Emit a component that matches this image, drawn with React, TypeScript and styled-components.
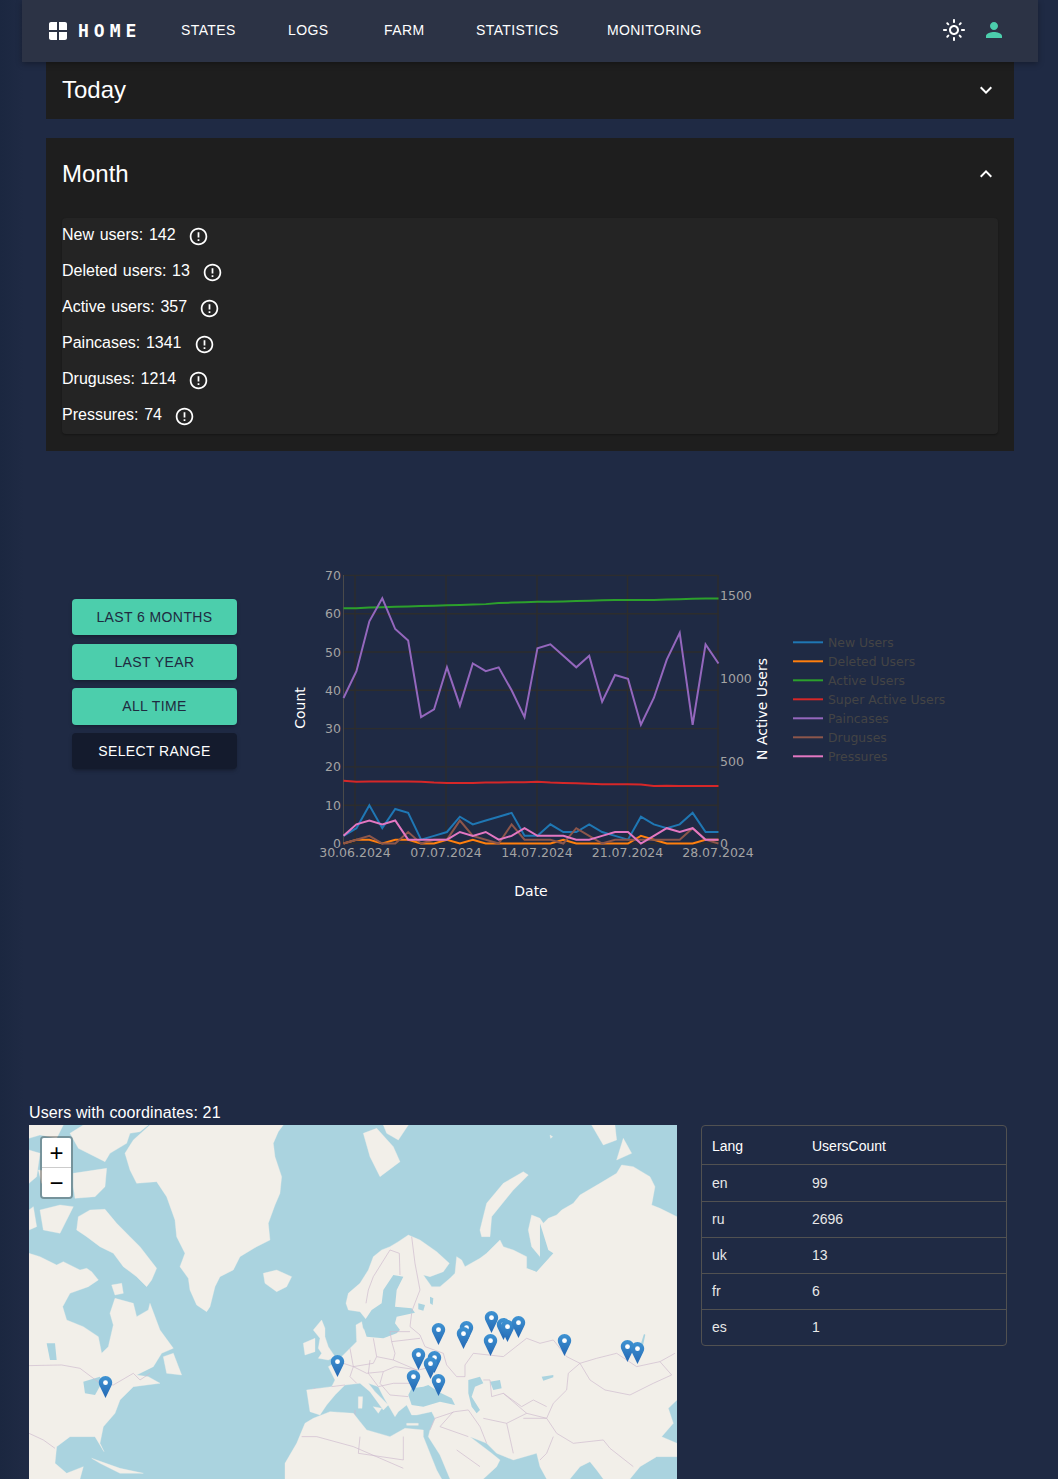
import styled, { createGlobalStyle } from "styled-components";
import {
  MdErrorOutline,
  MdExpandLess,
  MdExpandMore,
  MdOutlineLightMode,
  MdPerson,
  MdWindow,
} from "react-icons/md";

const GlobalStyle = createGlobalStyle`
  html, body {
    margin: 0;
    padding: 0;
    background: #1f2a44;
    overflow: hidden;
  }
  body {
    font-family: "Liberation Sans", Arial, sans-serif;
    color: #fff;
  }
`;

const Page = styled.div`
  width: 1058px;
  height: 1479px;
  overflow: hidden;
  background: linear-gradient(90deg, #1b2740 0, #1f2a44 24px);
`;

const Nav = styled.header`
  height: 62px;
  margin: 0 20px 0 22px;
  padding: 0 24px;
  display: flex;
  align-items: center;
  background: #2c3345;
  box-shadow: 0 2px 6px rgba(0, 0, 0, 0.3);
  position: relative;
  z-index: 2;
`;

const Brand = styled.div`
  display: flex;
  align-items: center;
  gap: 8px;
  width: 135px;
  font-family: "DejaVu Sans Mono", monospace;
  font-size: 18px;
  font-weight: 700;
  letter-spacing: 5px;
`;

const BrandText = styled.span`
  padding-bottom: 2px;
`;

const NavLinks = styled.nav`
  display: flex;
  flex: 1;
  padding-bottom: 2px;
`;

const NavLink = styled.a<{ $w: number }>`
  width: ${(p) => p.$w}px;
  font-size: 14px;
  letter-spacing: 0.4px;
  white-space: nowrap;
`;

const NavIcons = styled.div`
  display: flex;
  align-items: center;
  gap: 16px;
  margin-right: 8px;
  padding-bottom: 2px;
  font-size: 24px;
  svg {
    display: block;
  }
`;

const Stack = styled.section`
  margin: 0 44px 0 46px;
  display: flex;
  flex-direction: column;
  gap: 19px;
`;

const Card = styled.div`
  background: #1e1e1e;
  padding: 0 16px;
`;

const CardHead = styled.div<{ $h: number; $below: number }>`
  height: ${(p) => p.$h}px;
  margin-bottom: ${(p) => p.$below}px;
  display: flex;
  align-items: center;
  justify-content: space-between;
  font-size: 24px;
`;

const StatPanel = styled.div`
  height: 216px;
  margin-bottom: 17px;
  display: flex;
  flex-direction: column;
  background: #242424;
  border-radius: 4px;
  box-shadow: 0 1px 2px rgba(0, 0, 0, 0.3);
`;

const StatRow = styled.div`
  height: 36px;
  flex: none;
  display: flex;
  align-items: center;
  gap: 12px;
  font-size: 16px;
  word-spacing: 1.2px;
  svg {
    display: block;
  }
`;

const StatText = styled.span`
  padding-bottom: 2px;
`;

const ChartRow = styled.section`
  margin-top: 109px;
  padding-left: 72px;
  display: flex;
  gap: 43px;
`;

const RangeButtons = styled.div`
  width: 165px;
  margin-top: 39px;
  display: flex;
  flex-direction: column;
  gap: 8.37px;
`;

const RangeButton = styled.button<{ $dark?: boolean }>`
  height: 36.3px;
  padding: 0;
  border: 0;
  border-radius: 4px;
  font-family: inherit;
  font-size: 14px;
  letter-spacing: 0.4px;
  background: ${(p) => (p.$dark ? "#141b2d" : "#4cceac")};
  color: ${(p) => (p.$dark ? "#fff" : "#1f2a40")};
  box-shadow: 0 3px 3px -2px rgba(0, 0, 0, 0.2), 0 2px 4px rgba(0, 0, 0, 0.14);
`;

const ChartSvg = styled.svg`
  display: block;
  font-family: "DejaVu Sans", sans-serif;
`;

const GeoTitle = styled.div`
  margin: 192px 0 1px 29px;
  height: 22px;
  font-size: 16px;
  line-height: 22px;
  letter-spacing: 0.12px;
`;

const GeoRow = styled.section`
  padding-left: 29px;
  display: flex;
  align-items: flex-start;
  gap: 24px;
`;

const MapBox = styled.div`
  position: relative;
  width: 648px;
  height: 354px;
  overflow: hidden;
  background: #aad3df;
`;

const MapSvg = styled.svg`
  display: block;
`;

const ZoomBox = styled.div`
  position: absolute;
  left: 11px;
  top: 11px;
  width: 29px;
  border: 2px solid rgba(0, 0, 0, 0.3);
  border-radius: 4px;
  background-clip: padding-box;
`;

const ZoomButton = styled.div<{ $first?: boolean }>`
  height: 29px;
  display: flex;
  align-items: center;
  justify-content: center;
  background: #fff;
  color: #000;
  font-family: "Liberation Sans", sans-serif;
  font-size: 24px;
  border-bottom: ${(p) => (p.$first ? "1px solid #ccc" : "0")};
  border-radius: ${(p) => (p.$first ? "2px 2px 0 0" : "0 0 2px 2px")};
`;

const Pin = styled.svg<{ $x: number; $y: number }>`
  position: absolute;
  left: ${(p) => p.$x}px;
  top: ${(p) => p.$y}px;
  width: 15px;
  height: 22px;
`;

const LangTable = styled.div`
  width: 306px;
  box-sizing: border-box;
  border: 1px solid #515151;
  border-radius: 4px;
  font-size: 14px;
`;

const LangHead = styled.div`
  height: 37px;
  padding: 1px 0 0 10px;
  display: grid;
  grid-template-columns: 100px 1fr;
  align-items: center;
  color: #fff;
`;

const LangRow = styled.div`
  height: 34px;
  padding: 0 0 1px 10px;
  display: grid;
  grid-template-columns: 100px 1fr;
  align-items: center;
  color: #e8e8e8;
  border-top: 1px solid #515151;
  &:nth-child(2) {
    height: 36px;
    padding-bottom: 0;
  }
`;

const NAV_ITEMS: [string, number][] = [
  ["STATES", 107],
  ["LOGS", 96],
  ["FARM", 92],
  ["STATISTICS", 131],
  ["MONITORING", 120],
];

const STATS: [string, string][] = [
  ["New users:", "142"],
  ["Deleted users:", "13"],
  ["Active users:", "357"],
  ["Paincases:", "1341"],
  ["Druguses:", "1214"],
  ["Pressures:", "74"],
];

const LANGS: [string, string][] = [
  ["en", "99"],
  ["ru", "2696"],
  ["uk", "13"],
  ["fr", "6"],
  ["es", "1"],
];

const SERIES: { name: string; color: string; values: number[] }[] = [
  {
    name: "New Users",
    color: "#1f77b4",
    values: [2, 4, 10, 4, 9, 8, 1, 2, 3, 7, 5, 6, 7, 8, 2, 2, 5, 3, 3, 5, 3, 2, 1, 7, 5, 4, 5, 8, 3, 3],
  },
  {
    name: "Deleted Users",
    color: "#ff7f0e",
    values: [0, 1, 1, 0, 1, 1, 0, 0, 1, 0, 1, 0, 0, 0, 0, 0, 0, 1, 0, 0, 0, 0, 0, 2, 1, 0, 0, 0, 1, 1],
  },
  {
    name: "Active Users",
    color: "#2ca02c",
    values: [
      61.4, 61.4, 61.6, 61.7, 61.8, 61.9, 62, 62.1, 62.2, 62.3, 62.4, 62.5, 62.8, 62.9, 63, 63.1, 63.1, 63.2, 63.3,
      63.4, 63.5, 63.6, 63.6, 63.6, 63.6, 63.7, 63.8, 63.9, 64, 64,
    ],
  },
  {
    name: "Super Active Users",
    color: "#d62728",
    values: [
      16.4, 16.1, 16.2, 16.2, 16.2, 16.2, 16.1, 15.9, 15.8, 15.8, 15.8, 15.9, 15.9, 16, 16, 16.1, 15.9, 15.8, 15.7,
      15.6, 15.5, 15.5, 15.5, 15.4, 15, 15.1, 15, 15, 15, 15,
    ],
  },
  {
    name: "Paincases",
    color: "#9467bd",
    values: [38, 45, 58, 64, 56, 53, 33, 35, 46, 36, 47, 45, 46, 40, 33, 51, 52, 49, 46, 49, 37, 44, 43, 31, 38, 48, 55, 31, 52, 47],
  },
  {
    name: "Druguses",
    color: "#8c564b",
    values: [0, 1, 2, 0, 0, 3, 0, 1, 1, 6, 2, 1, 0, 5, 1, 1, 1, 0, 4, 2, 0, 1, 1, 1, 1, 1, 1, 4, 1, 0],
  },
  {
    name: "Pressures",
    color: "#e377c2",
    values: [2, 5, 6, 5, 6, 1, 1, 1, 1, 3, 2, 3, 1, 2, 4, 2, 2, 2, 1, 1, 2, 3, 3, 0, 2, 4, 3, 4, 1, 1],
  },
];

const PLOT_L = 343.5;
const PLOT_R = 718.5;
const Y0 = 843.5;
const UNIT = 3.83;
const STEP = (PLOT_R - PLOT_L) / 29;

function LineChart() {
  const yTicks = [0, 10, 20, 30, 40, 50, 60, 70];
  const xTicks: [string, number][] = [
    ["30.06.2024", 355],
    ["07.07.2024", 446],
    ["14.07.2024", 537],
    ["21.07.2024", 627.5],
    ["28.07.2024", 718],
  ];
  const rightTicks: [string, number][] = [
    ["1500", 600],
    ["1000", 683],
    ["500", 766],
    ["0", 848],
  ];
  return (
    <ChartSvg width={680} height={350} viewBox="280 560 680 350">
      <g stroke="#2d2d2d" strokeWidth={1.4}>
        {yTicks.map((t) => (
          <line key={t} x1={PLOT_L} x2={PLOT_R} y1={Y0 - t * UNIT} y2={Y0 - t * UNIT} />
        ))}
        {xTicks.map(([label, x]) => (
          <line key={label} x1={x} x2={x} y1={575} y2={Y0} />
        ))}
      </g>
      <line x1={PLOT_L} x2={PLOT_L} y1={575} y2={Y0} stroke="#4a4a4a" />
      {SERIES.map((s) => (
        <polyline
          key={s.name}
          fill="none"
          stroke={s.color}
          strokeWidth={2}
          points={s.values.map((v, i) => `${PLOT_L + i * STEP},${Y0 - v * UNIT}`).join(" ")}
        />
      ))}
      <g fill="#a3a3a3" fontSize={12.5}>
        {yTicks.map((t) => (
          <text key={t} x={341} y={Y0 - t * UNIT + 4.5} textAnchor="end">
            {t}
          </text>
        ))}
        {xTicks.map(([label, x]) => (
          <text key={label} x={x} y={857} textAnchor="middle">
            {label}
          </text>
        ))}
        {rightTicks.map(([label, y]) => (
          <text key={label} x={720} y={y}>
            {label}
          </text>
        ))}
      </g>
      <g fill="#fff" fontSize={14}>
        <text x={531} y={896} textAnchor="middle">
          Date
        </text>
        <text transform="translate(305 708) rotate(-90)" textAnchor="middle">
          Count
        </text>
        <text transform="translate(767 709) rotate(-90)" textAnchor="middle">
          N Active Users
        </text>
      </g>
      {SERIES.map((s, i) => (
        <g key={s.name}>
          <line x1={793} x2={823} y1={642.3 + i * 19} y2={642.3 + i * 19} stroke={s.color} strokeWidth={2} />
          <text x={828} y={647 + i * 19} fill="#444" fontSize={12.4}>
            {s.name}
          </text>
        </g>
      ))}
    </ChartSvg>
  );
}

// coordinates below are in the 3x crop space, the groups scale them back down
const WEST_LAND = [
  "M390,105 L790,105 L775,125 L760,160 L765,200 L785,260 L780,310 L765,345 L745,400 L750,450 L710,470 L660,500 L640,540 L600,560 L585,590 L570,650 L560,665 L530,645 L510,600 L505,565 L480,530 L495,490 L470,440 L465,390 L440,320 L410,275 L350,280 L330,240 L315,190 L340,150Z",
  "M190,105 L385,105 L360,125 L330,130 L320,160 L270,190 L255,215 L215,195 L175,175 L150,130Z",
  "M160,250 L260,235 L255,290 L225,320 L165,325 L160,290Z",
  "M27,105 L130,105 L110,145 L60,135 L27,145Z",
  "M27,180 L60,190 L50,260 L27,280Z",
  "M55,240 L140,250 L130,310 L65,280Z",
  "M27,360 L40,350 L50,410 L27,420Z",
  "M60,360 L120,345 L160,350 L120,430 L70,420Z",
  "M175,380 L210,360 L255,358 L290,400 L330,440 L360,470 L410,535 L395,570 L380,590 L350,560 L310,530 L280,490 L240,470 L200,440 L170,420Z",
  "M275,585 L305,580 L310,610 L285,615Z",
  "M27,490 L60,500 L110,525 L130,515 L180,540 L200,535 L215,545 L235,570 L205,590 L150,610 L128,650 L140,690 L190,710 L235,740 L245,790 L265,770 L280,705 L270,670 L285,625 L340,640 L350,680 L385,660 L390,640 L420,720 L460,775 L425,790 L400,830 L350,855 L385,860 L420,880 L380,885 L340,890 L300,930 L285,970 L250,1010 L240,1060 L252,1085 L225,1040 L150,1040 L110,1070 L105,1120 L140,1150 L190,1130 L180,1167 L27,1167Z",
  "M430,800 L460,790 L485,855 L440,850Z",
  "M215,1105 L300,1135 L370,1150 L300,1150 L240,1120Z",
  "M730,550 L770,540 L815,560 L800,590 L770,605 L735,580Z",
  "M905,690 L915,715 L915,740 L925,770 L945,800 L925,810 L895,805 L905,790 L895,775 L900,745 L880,720Z",
  "M850,760 L885,745 L885,785 L855,795Z",
];

const WEST_WATER = [
  "M190,875 L240,860 L245,880 L225,915 L195,910Z",
  "M80,760 L105,760 L110,810 L90,810Z",
];

const EAST_LAND = [
  "M-35,830 L-10,815 L25,780 L50,755 L48,705 L65,695 L70,720 L80,690 L60,665 L25,660 L18,640 L25,610 L60,580 L85,540 L100,500 L125,480 L150,470 L175,455 L205,435 L240,450 L290,485 L328,520 L310,545 L270,560 L250,555 L275,590 L300,590 L330,565 L345,550 L350,500 L365,510 L375,530 L420,505 L440,490 L480,450 L490,470 L520,480 L560,500 L560,535 L590,545 L600,500 L575,470 L565,420 L575,375 L600,385 L610,400 L625,385 L650,375 L665,360 L700,340 L720,315 L780,280 L830,250 L845,225 L880,230 L930,260 L945,290 L935,345 L960,355 L1011,380 L1011,930 L985,955 L1000,1000 L965,1040 L1011,1060 L1011,1100 L950,1100 L900,1130 L870,1167 L790,1167 L770,1140 L750,1115 L720,1130 L690,1167 L620,1167 L600,1130 L590,1090 L520,1110 L470,1090 L440,1060 L390,1040 L455,1090 L480,1110 L470,1130 L430,1167 L330,1167 L300,1095 L265,1040 L270,1020 L285,985 L275,965 L230,975 L215,975 L200,945 L175,965 L165,980 L130,920 L115,890 L85,880 L105,905 L145,945 L130,960 L90,905 L60,880 L15,885 L-15,915 L-40,945 L-60,975 L-90,965 L-100,900 L-25,890 L-15,870Z",
  "M-165,1167 L-165,1120 L-130,1060 L-105,1000 L-80,985 L-30,965 L40,970 L60,995 L80,1020 L150,1040 L195,1015 L250,1020 L250,1040 L290,1140 L305,1167Z",
  "M70,130 L110,115 L160,170 L180,215 L120,260 L90,200Z",
  "M130,105 L205,105 L175,150 L140,130Z",
  "M420,420 L440,340 L490,280 L550,245 L565,255 L520,300 L455,380 L450,440 L425,440Z",
  "M755,105 L825,105 L830,150 L790,165Z",
  "M850,145 L875,190 L830,210Z",
  "M630,135 L638,140 L632,145Z",
  "M100,950 L125,955 L115,970Z",
  "M55,920 L68,920 L66,955 L55,955Z",
  "M200,1000 L235,1000 L235,1006 L200,1006Z",
  "M285,1000 L305,985 L300,1000Z",
];

const EAST_WATER = [
  "M75,690 L95,660 L125,640 L130,600 L160,555 L190,560 L170,600 L165,650 L215,655 L225,668 L170,680 L165,700 L180,720 L170,730 L130,745 L80,740 L70,710Z",
  "M205,915 L215,895 L250,890 L265,885 L295,905 L335,925 L345,945 L300,935 L250,950 L215,945Z",
  "M385,870 L420,860 L430,880 L405,890 L395,920 L420,960 L410,970 L395,950 L385,910Z",
  "M600,400 L625,480 L640,490 L590,545 L565,535 L600,500Z",
  "M235,640 L255,645 L250,662 L235,658Z",
  "M270,620 L280,625 L278,645 L270,640Z",
  "M900,770 L912,732 L916,734 L908,772Z",
  "M450,875 L480,870 L485,895 L460,900Z",
  "M605,860 L640,855 L640,862 L610,872Z",
];

const EAST_BORDERS = [
  "M150,480 L100,560 L85,600 L78,640",
  "M150,480 L178,490 L180,555",
  "M215,440 L225,520 L240,600 L215,665",
  "M215,670 L210,710 L240,735 L255,770 L310,790 L320,825",
  "M150,725 L210,725",
  "M150,725 L155,755 L240,745",
  "M100,745 L110,800 L160,810 L165,790 L155,755",
  "M30,775 L40,830 L100,820 L110,800",
  "M-5,815 L40,830 L30,860 L50,880",
  "M40,830 L80,850 L130,845 L165,830 L235,840 L280,830",
  "M90,810 L85,850 L115,890 L160,880 L210,880",
  "M160,810 L230,840 L225,880",
  "M130,845 L120,880 L150,915 L205,920",
  "M-25,890 L15,885",
  "M320,825 L350,860 L375,860 L375,825",
  "M285,985 L345,965 L385,960 L420,1010 L440,1060",
  "M375,825 L400,790 L490,800 L560,745 L600,760 L640,750 L680,800 L720,820",
  "M720,820 L770,805 L830,790 L890,830 L960,815 L1005,790",
  "M720,820 L750,870 L795,900 L870,915 L940,880 L995,855 L960,815",
  "M720,820 L685,850 L680,900 L640,940 L620,985 L560,970 L490,910 L455,920 L450,870 L430,870",
  "M430,985 L500,1000 L520,1090",
  "M550,985 L620,985 L650,1030 L700,1060 L790,1050 L810,1075 L880,1130",
  "M490,910 L545,950 L580,930 L620,950",
  "M500,1000 L560,970",
  "M640,1040 L620,1090 L600,1110",
  "M340,965 L300,1010 L385,1040",
  "M285,985 L270,1020",
  "M350,1080 L420,1130",
  "M190,1040 L190,1110 L55,1090 L60,1040",
  "M-115,1040 L-70,1040 L40,1070 L190,1135",
];

const WEST_BORDERS = [
  "M27,827 L125,825 L180,835 L240,880 L280,885 L340,850 L360,870 L390,850",
  "M945,905 L880,895",
  "M810,1120 L860,1070 L960,1140 L1020,1110",
  "M860,1070 L885,1167",
  "M920,970 L920,1015 L870,1050 L835,1080",
  "M1005,960 L1005,1010",
  "M27,1030 L70,1050 L105,1075",
];

const PINS: [number, number][] = [
  [-703, 858],
  [-8, 795],
  [380, 694],
  [295, 700],
  [370, 710],
  [454, 663],
  [451, 733],
  [490, 685],
  [502, 691],
  [535, 679],
  [673, 733],
  [862, 751],
  [892, 757],
  [235, 775],
  [283, 782],
  [270, 802],
  [220, 841],
  [295, 851],
];

function WorldMap() {
  return (
    <MapBox>
      <MapSvg width={648} height={354} viewBox="29 1125 648 354">
        <rect x={29} y={1125} width={648} height={354} fill="#aad3df" />
        <g transform="translate(20 1090) scale(0.3333)">
          {WEST_LAND.map((d) => (
            <path key={d} d={d} fill="#f2efe9" stroke="#f2efe9" strokeLinejoin="round" />
          ))}
          {WEST_WATER.map((d) => (
            <path key={d} d={d} fill="#aad3df" />
          ))}
          {WEST_BORDERS.map((d) => (
            <path key={d} d={d} fill="none" stroke="#cdb9cd" strokeWidth={2} />
          ))}
        </g>
        <g transform="translate(340 1090) scale(0.3333)">
          {EAST_LAND.map((d) => (
            <path key={d} d={d} fill="#f2efe9" stroke="#f2efe9" strokeLinejoin="round" />
          ))}
          {EAST_WATER.map((d) => (
            <path key={d} d={d} fill="#aad3df" />
          ))}
          {EAST_BORDERS.map((d) => (
            <path key={d} d={d} fill="none" stroke="#cdb9cd" strokeWidth={2} />
          ))}
        </g>
      </MapSvg>
      {PINS.map(([zx, zy]) => (
        <Pin
          key={`${zx}-${zy}`}
          viewBox="0 0 25 41"
          $x={Math.round(340 + zx / 3 - 7.5 - 29)}
          $y={Math.round(1090 + zy / 3 - 1125)}
        >
          <defs>
            <linearGradient id="pinFill" x1="0" y1="0" x2="0" y2="1">
              <stop offset="0" stopColor="#3f93d2" />
              <stop offset="1" stopColor="#2468b4" />
            </linearGradient>
          </defs>
          <path
            fill="url(#pinFill)"
            d="M12.5 0C5.6 0 0 5.6 0 12.5c0 2.3.7 4.6 1.9 6.5L12.5 41l10.6-22c1.2-1.9 1.9-4.2 1.9-6.5C25 5.6 19.4 0 12.5 0z"
          />
          <circle cx={12.5} cy={12.5} r={4.5} fill="#fff" />
        </Pin>
      ))}
      <ZoomBox>
        <ZoomButton $first>+</ZoomButton>
        <ZoomButton>−</ZoomButton>
      </ZoomBox>
    </MapBox>
  );
}

export default function App() {
  return (
    <Page>
      <GlobalStyle />
      <Nav>
        <Brand>
          <MdWindow size={24} />
          <BrandText>HOME</BrandText>
        </Brand>
        <NavLinks>
          {NAV_ITEMS.map(([label, w]) => (
            <NavLink key={label} $w={w}>
              {label}
            </NavLink>
          ))}
        </NavLinks>
        <NavIcons>
          <MdOutlineLightMode />
          <MdPerson color="#4cceac" />
        </NavIcons>
      </Nav>
      <Stack>
        <Card>
          <CardHead $h={56} $below={1}>
            Today
            <MdExpandMore size={24} />
          </CardHead>
        </Card>
        <Card>
          <CardHead $h={72} $below={8}>
            Month
            <MdExpandLess size={24} />
          </CardHead>
          <StatPanel>
            {STATS.map(([label, value]) => (
              <StatRow key={label}>
                <StatText>
                  {label} {value}
                </StatText>
                <MdErrorOutline size={21} />
              </StatRow>
            ))}
          </StatPanel>
        </Card>
      </Stack>
      <ChartRow>
        <RangeButtons>
          <RangeButton>LAST 6 MONTHS</RangeButton>
          <RangeButton>LAST YEAR</RangeButton>
          <RangeButton>ALL TIME</RangeButton>
          <RangeButton $dark>SELECT RANGE</RangeButton>
        </RangeButtons>
        <LineChart />
      </ChartRow>
      <GeoTitle>Users with coordinates: 21</GeoTitle>
      <GeoRow>
        <WorldMap />
        <LangTable>
          <LangHead>
            <span>Lang</span>
            <span>UsersCount</span>
          </LangHead>
          {LANGS.map(([lang, count]) => (
            <LangRow key={lang}>
              <span>{lang}</span>
              <span>{count}</span>
            </LangRow>
          ))}
        </LangTable>
      </GeoRow>
    </Page>
  );
}
